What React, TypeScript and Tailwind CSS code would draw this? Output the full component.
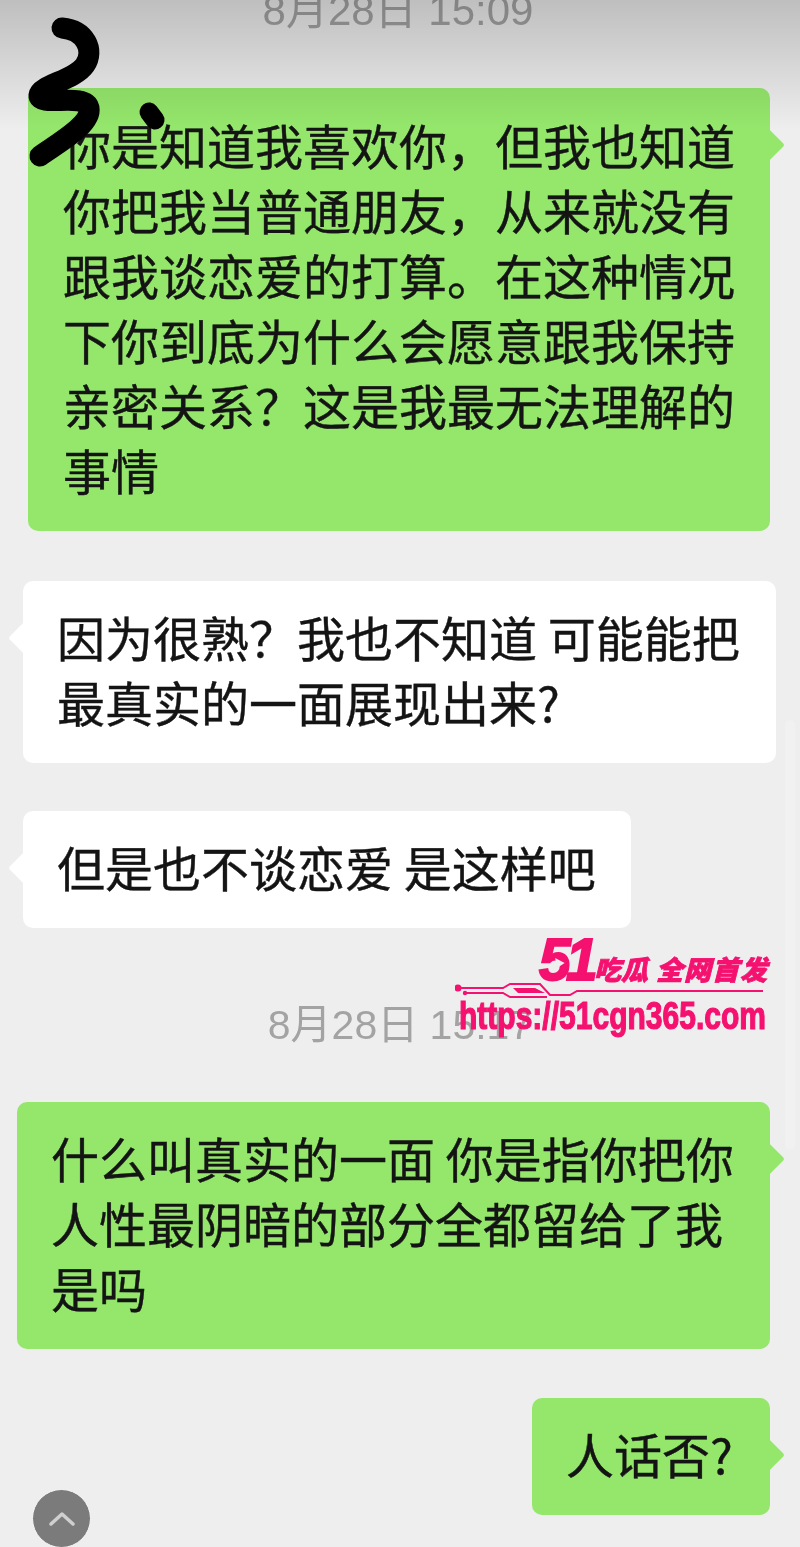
import React from "react";

const font = { fontFamily: '"Noto Sans CJK SC", "Noto Sans", sans-serif' };
const latin = { fontFamily: '"Liberation Sans", "Noto Sans CJK SC", sans-serif' };

function Bubble({ side, className, lines }: { side: "l" | "r"; className: string; lines: string[] }) {
  const green = side === "r";
  return (
    <div
      className={`relative rounded-[10px] pt-[23px] pb-[29px] text-[48px] leading-[65px] text-[#141414] whitespace-nowrap [-webkit-text-stroke:0.4px_#141414] ${green ? "bg-[#95e76c]" : "bg-white"} ${className}`}
    >
      <div
        className={`absolute top-[45px] h-[24px] w-[24px] rotate-45 rounded-[3px] ${green ? "right-[-10px] bg-[#95e76c]" : "left-[-10px] bg-white"}`}
      />
      <div className="relative">
        {lines.map((l) => (
          <div key={l}>{l}</div>
        ))}
      </div>
    </div>
  );
}

function Time({ text, className }: { text: string; className: string }) {
  return (
    <div
      className={`flex h-[48px] items-center justify-center leading-[48px] text-[#a3a3a3] ${className}`}
      style={latin}
    >
      {text}
    </div>
  );
}

export default function App() {
  return (
    <div className="relative h-[1547px] w-[800px] overflow-hidden bg-[#eeeeee] [filter:blur(0.5px)]" style={font}>
      <div className="flex flex-col">
        <Time text="8月28日 15:09" className="mt-[-13px] mb-[53px] pr-[4px] text-[42px]" />
        <Bubble
          side="r"
          className="ml-[28px] w-[742px] pl-[35px] pt-[24px]"
          lines={[
            "你是知道我喜欢你，但我也知道",
            "你把我当普通朋友，从来就没有",
            "跟我谈恋爱的打算。在这种情况",
            "下你到底为什么会愿意跟我保持",
            "亲密关系？这是我最无法理解的",
            "事情",
          ]}
        />
        <Bubble
          side="l"
          className="ml-[23px] mt-[50px] w-[753px] pl-[34px]"
          lines={["因为很熟？我也不知道 可能能把", "最真实的一面展现出来?"]}
        />
        <Bubble side="l" className="ml-[23px] mt-[48px] w-[608px] pl-[34px]" lines={["但是也不谈恋爱 是这样吧"]} />
        <Time text="8月28日 15:17" className="mt-[73px] mb-[53px] text-[41px]" />
        <Bubble
          side="r"
          className="ml-[17px] w-[753px] pl-[34px]"
          lines={["什么叫真实的一面 你是指你把你", "人性最阴暗的部分全都留给了我", "是吗"]}
        />
        <Bubble side="r" className="ml-[532px] mt-[49px] w-[238px] pl-[34px]" lines={["人话否?"]} />
      </div>

      {/* top shadow */}
      <div className="pointer-events-none absolute inset-x-0 top-0 h-[130px] bg-gradient-to-b from-black/20 to-transparent" />

      {/* scrollbar */}
      <div className="absolute right-[5px] top-[720px] h-[430px] w-[10px] rounded-full bg-[#f1f1f1]" />

      {/* scribble */}
      <svg className="absolute left-0 top-0" width="180" height="180" viewBox="0 0 180 180" fill="none">
        <path
          d="M62 28 C85 30 95 50 85 65 C75 80 40 85 39 95 C38 108 85 92 89 108 C92 125 55 145 40 156"
          stroke="#000"
          strokeWidth="21"
          strokeLinecap="round"
          strokeLinejoin="round"
        />
        <path d="M149 112 L155 120" stroke="#000" strokeWidth="19" strokeLinecap="round" />
      </svg>

      {/* watermark */}
      <div className="absolute left-[455px] top-[930px] flex w-[320px] flex-col text-[#f5116f]">
        <div className="flex items-start pl-[84px]">
          <div
            className="relative h-[60px] w-[54px] origin-left scale-x-[0.95] text-[60px] font-bold italic leading-[60px] tracking-[-5px] [-webkit-text-stroke:2px_#f5116f]"
            style={latin}
          >
            51
            <svg className="absolute left-[16px] top-[27px]" width="12" height="12" viewBox="0 0 12 12">
              <path d="M1 1 L11 6 L3 11 Z" fill="#eeeeee" />
            </svg>
          </div>
          <div className="mt-[24px] flex items-center text-[27px] font-black italic leading-[30px] [-webkit-text-stroke:0.8px_#f5116f]">
            <span className="ml-[1px] mr-[8px]">吃瓜</span>
            <span className="tracking-[1px]">全网首发</span>
          </div>
        </div>
        <svg className="mt-[-11px]" width="320" height="24" viewBox="0 0 320 24" fill="none">
          <circle cx="3" cy="9" r="3.5" fill="#f5116f" />
          <circle cx="10" cy="14" r="2.2" fill="#f5116f" />
          <path
            d="M3 9 H48 L55 5 H85 L95 16 H115 L122 12 H308 M10 14 H48 L55 18 H92"
            stroke="#f5116f"
            strokeWidth="2"
          />
          <path d="M58 9 H80 L90 14 H63 Z" fill="#f5116f" />
        </svg>
        <div
          className="mt-[-9px] ml-[4px] origin-left scale-x-[0.79] text-[38px] font-bold leading-[44px] whitespace-nowrap [-webkit-text-stroke:1.2px_#f5116f]"
          style={latin}
        >
          https://51cgn365.com
        </div>
      </div>

      {/* back to top */}
      <div className="absolute left-[32px] top-[1489px] flex h-[59px] w-[59px] items-center justify-center rounded-full border border-[#f8f8f8] bg-[#7b7b7b]">
        <svg width="26" height="16" viewBox="0 0 26 16" fill="none">
          <path d="M2 13 L13 3 L24 13" stroke="#cfcfcf" strokeWidth="3.5" strokeLinecap="round" strokeLinejoin="round" />
        </svg>
      </div>
    </div>
  );
}
